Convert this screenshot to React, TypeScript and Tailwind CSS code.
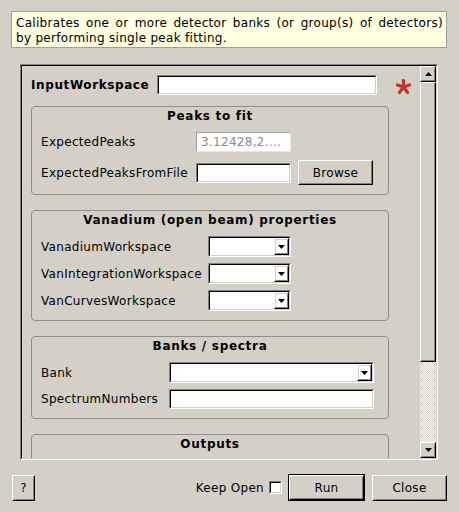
import type { ReactNode } from "react";

function Raised({ className = "", children }: { className?: string; children?: ReactNode }) {
  return (
    <div className={`border border-t-white border-l-white border-r-black border-b-black ${className}`}>
      <div className="w-full h-full border border-t-[#d4d0c8] border-l-[#d4d0c8] border-r-[#808080] border-b-[#808080] flex items-center justify-center">
        {children}
      </div>
    </div>
  );
}

function Sunken({ className = "", children }: { className?: string; children?: ReactNode }) {
  return (
    <div className={`border border-t-[#808080] border-l-[#808080] border-r-white border-b-white ${className}`}>
      <div className="w-full h-full border border-t-black border-l-black border-r-[#d4d0c8] border-b-[#d4d0c8] bg-white flex justify-end">
        {children}
      </div>
    </div>
  );
}

function Arrow({ up = false }: { up?: boolean }) {
  return (
    <svg width="7" height="4" viewBox="0 0 7 4">
      <polygon points={up ? "0,4 7,4 3.5,0" : "0,0 7,0 3.5,4"} fill="black" />
    </svg>
  );
}

function Combo({ width }: { width: string }) {
  return (
    <Sunken className={`${width} h-[21px]`}>
      <Raised className="w-[15px] h-full">
        <Arrow />
      </Raised>
    </Sunken>
  );
}

function Group({ title, children }: { title: string; children: ReactNode }) {
  return (
    <div className="w-[358px] shrink-0 border border-[#8e8e8e] rounded-[4px] px-[9px] pt-[2px] pb-[9px]">
      <div className="h-[15px] leading-[15px] font-bold tracking-[0.7px] text-center mb-[8px]">{title}</div>
      <div className="flex flex-col gap-[6px]">{children}</div>
    </div>
  );
}

function Row({ label, labelWidth, children }: { label: string; labelWidth: string; children: ReactNode }) {
  return (
    <div className="flex items-center">
      <div className={`${labelWidth} shrink-0 whitespace-nowrap`}>{label}</div>
      {children}
    </div>
  );
}

export default function App() {
  return (
    <div className="w-[459px] h-[512px] bg-[#d4d0c8] text-black text-[12px] tracking-[0.3px] font-['DejaVu_Sans',sans-serif] pt-[11px] pl-[11px] pr-[12px] flex flex-col overflow-hidden">
      <div className="h-[37px] border border-[#a0a0a0] bg-[#ffffe1] pl-[4px] pr-[3px] pt-[4px] leading-[15px]">
        <div className="text-justify [text-align-last:justify] whitespace-nowrap">
          Calibrates one or more detector banks (or group(s) of detectors)
        </div>
        <div>by performing single peak fitting.</div>
      </div>

      <div className="mt-[16px] ml-[9px] w-[418px] h-[396px] border border-t-[#808080] border-l-[#808080] border-r-white border-b-white">
        <div className="w-full h-full border border-t-black border-l-black border-r-[#d4d0c8] border-b-[#d4d0c8] flex">
          <div className="flex-1 overflow-hidden pl-[9px] pt-[9px] flex flex-col">
            <div className="flex items-center h-[20px] shrink-0">
              <div className="w-[126px] shrink-0 font-bold tracking-[0.6px]">InputWorkspace</div>
              <Sunken className="w-[220px] h-[20px]" />
              <svg className="ml-[19px] mt-[2px]" width="15" height="15" viewBox="0 0 15 15">
                <g stroke="#b83a2a" strokeWidth="3.2" strokeLinecap="round">
                  <line x1="7.5" y1="8" x2="7.5" y2="1.5" />
                  <line x1="7.5" y1="8" x2="13.5" y2="6" />
                  <line x1="7.5" y1="8" x2="1.5" y2="6" />
                  <line x1="7.5" y1="8" x2="11.5" y2="13.5" />
                  <line x1="7.5" y1="8" x2="3.5" y2="13.5" />
                </g>
              </svg>
            </div>

            <div className="mt-[11px] flex flex-col gap-[15px]">
              <Group title="Peaks to fit">
                <Row label="ExpectedPeaks" labelWidth="w-[155px]">
                  <div className="w-[95px] h-[20px] border border-t-[#a0a0a0] border-l-[#a0a0a0] border-r-[#e8e6e2] border-b-[#e8e6e2] bg-white text-[#8a8a8a] pl-[4px] leading-[18px]">
                    3.12428,2....
                  </div>
                </Row>
                <div className="flex items-center mt-[2px]">
                  <div className="w-[155px] shrink-0 whitespace-nowrap">ExpectedPeaksFromFile</div>
                  <Sunken className="w-[95px] h-[20px]" />
                  <Raised className="ml-[7px] w-[75px] h-[25px]">Browse</Raised>
                </div>
              </Group>

              <Group title="Vanadium (open beam) properties">
                <Row label="VanadiumWorkspace" labelWidth="w-[167px]">
                  <Combo width="w-[83px]" />
                </Row>
                <Row label="VanIntegrationWorkspace" labelWidth="w-[167px]">
                  <Combo width="w-[83px]" />
                </Row>
                <Row label="VanCurvesWorkspace" labelWidth="w-[167px]">
                  <Combo width="w-[83px]" />
                </Row>
              </Group>

              <Group title="Banks / spectra">
                <Row label="Bank" labelWidth="w-[128px]">
                  <Combo width="w-[205px]" />
                </Row>
                <Row label="SpectrumNumbers" labelWidth="w-[128px]">
                  <Sunken className="w-[205px] h-[20px]" />
                </Row>
              </Group>

              <Group title="Outputs">
                <div className="h-[40px]" />
              </Group>
            </div>
          </div>

          <div className="w-[16px] shrink-0 flex flex-col">
            <Raised className="h-[16px] shrink-0">
              <Arrow up />
            </Raised>
            <Raised className="h-[280px] shrink-0" />
            <div className="flex-1 bg-[image:repeating-conic-gradient(#ffffff_0_25%,#d4d0c8_0_50%)] bg-[length:2px_2px]" />
            <Raised className="h-[16px] shrink-0">
              <Arrow />
            </Raised>
          </div>
        </div>
      </div>

      <div className="mt-[14px] flex items-center h-[27px]">
        <Raised className="ml-[1px] w-[23px] h-[26px]">?</Raised>
        <div className="flex-1" />
        <span>Keep Open</span>
        <div className="ml-[5px] w-[13px] h-[13px] border border-t-[#808080] border-l-[#808080] border-r-white border-b-white">
          <div className="w-full h-full border border-t-black border-l-black border-r-[#d4d0c8] border-b-[#d4d0c8] bg-white" />
        </div>
        <div className="ml-[6px] border border-black">
          <Raised className="w-[75px] h-[25px]">Run</Raised>
        </div>
        <Raised className="ml-[7px] w-[75px] h-[26px]">Close</Raised>
      </div>
    </div>
  );
}
